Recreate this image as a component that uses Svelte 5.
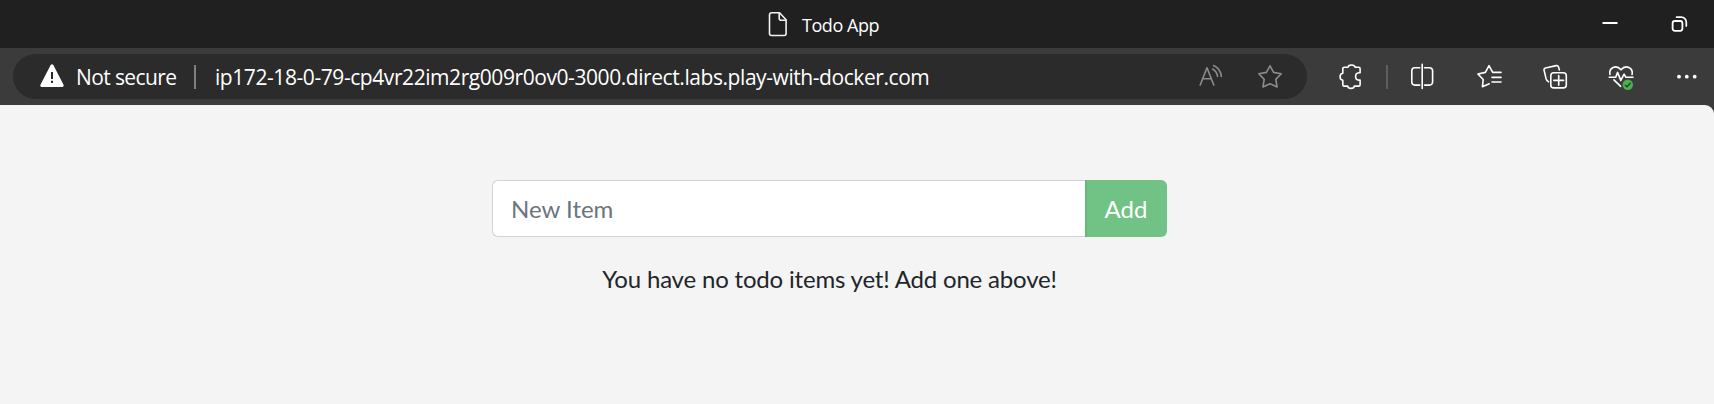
<script>
  let item = $state('');
</script>

<div class="window">
  <header class="titlebar">
    <div class="title">
      <svg width="20" height="26" viewBox="0 0 20 26" fill="none" stroke="#f2f2f2" stroke-width="1.6" stroke-linejoin="round">
        <path d="M3.5 1.8h8l6.6 7v13.7a2 2 0 0 1-2 2H3.5a2 2 0 0 1-2-2V3.8a2 2 0 0 1 2-2z" />
        <path d="M11.2 2v5.3a2 2 0 0 0 2 2h5" />
      </svg>
      <span>Todo App</span>
    </div>
    <div class="controls">
      <svg width="16" height="20" viewBox="0 0 16 20"><path d="M0.5 9h15" stroke="#fff" stroke-width="2" /></svg>
      <svg width="18" height="20" viewBox="0 0 18 20" fill="none" stroke="#fff" stroke-width="1.8">
        <rect x="1.6" y="7" width="9.8" height="9.8" rx="2.2" />
        <path d="M5.6 3.2h4.7a5 5 0 0 1 5 5V12" stroke-linecap="round" stroke-width="1.7" />
      </svg>
    </div>
  </header>

  <nav class="toolbar">
    <div class="address">
      <svg class="warn" width="26" height="29" viewBox="0 0 26 29">
        <path d="M13 3.8 23.2 23.5H2.8z" fill="#fff" stroke="#fff" stroke-width="3" stroke-linejoin="round" />
        <path d="M13 10v7M13 18.8v2.2" stroke="#2b2b2b" stroke-width="2" />
      </svg>
      <span class="secure">Not secure</span>
      <span class="rule"></span>
      <span class="url">ip172-18-0-79-cp4vr22im2rg009r0ov0-3000.direct.labs.play-with-docker.com</span>
      <div class="page-actions">
        <svg class="icon dim" viewBox="0 0 28 29">
          <path d="M4.2 23 11 5.8 17.8 23M6.8 16.8h8.4M16.6 7q4.2 2.2 5 7.5M17.6 3.5q7 3 7.7 11" />
        </svg>
        <svg class="icon dim" viewBox="0 0 28 29">
          <path d="M14 3.8l3.6 6.6 7.6 1.4-5.4 5.6 1.3 7.6L14 21.7l-7.1 3.3 1.3-7.6-5.4-5.6 7.6-1.4z" />
        </svg>
      </div>
    </div>

    <svg class="icon puzzle" viewBox="0 0 28 29">
      <path d="M8.2 5.3H12C12.2 2.2 18.8 2.2 19 5.3h3.7q1.4 0 1.4 1.4v4h-1.2c-4.4.4-4.4 7 0 7.4h1.2v4.6q0 1.4-1.4 1.4h-4.4c-.3 3-6.3 3-6.6 0H8.2q-1.4 0-1.4-1.4v-4.4c-3.6-.5-3.6-6.5 0-7V6.7q0-1.4 1.4-1.4z" />
    </svg>
    <span class="rule faint"></span>
    <svg class="icon split" viewBox="0 0 28 29">
      <path d="M14.2 2.2v24.2M11.7 5.7H6.8a3 3 0 0 0-3 3v11.4a3 3 0 0 0 3 3h4.9M16.6 5.7h5a3 3 0 0 1 3 3v11.4a3 3 0 0 1-3 3h-5" />
    </svg>
    <svg class="icon favs" viewBox="0 0 28 29">
      <path d="M26 10.4h-8.3L14 3.7l-3.6 6.7-7.5 1.6 5.3 5.5-.8 7.3 6.8-3M17 15.4h9M17 20h9" />
    </svg>
    <svg class="icon coll" viewBox="0 0 28 29">
      <rect x="9.8" y="10.7" width="15.5" height="15.2" rx="3" />
      <path d="M17.7 13.5v9.8M12.8 18.4h9.8M18.4 8l-.9-3a2 2 0 0 0-2.2-1.4L4.5 6a2 2 0 0 0-1.4 2.4l2 8.4q.6 2.2 2.4 3" />
    </svg>
    <svg class="icon heart" viewBox="0 0 28 29">
      <path d="M2.9 12.4C1.7 6.2 9 1.7 14 7.8c5-6.1 12.3-1.6 11.1 4.6M2.2 15.2h6.5l1.9-4.8 3.2 8 3.3-6.3 1.7 3.1h7.2M6.9 17.8l6.8 6.5" />
      <circle cx="20.8" cy="22.8" r="5.2" fill="#4caf50" stroke="none" />
      <path d="M18.3 23.1l1.7 1.6 3.3-3.5" stroke="#25402b" stroke-width="1.3" />
    </svg>
    <svg class="icon dots" viewBox="0 0 28 29">
      <g fill="#fff" stroke="none"><circle cx="6" cy="14.7" r="1.9" /><circle cx="13.8" cy="14.7" r="1.9" /><circle cx="21.7" cy="14.7" r="1.9" /></g>
    </svg>
  </nav>

  <main>
    <form onsubmit={(e) => e.preventDefault()}>
      <input type="text" placeholder="New Item" bind:value={item} />
      <button type="submit" disabled={!item}>Add</button>
    </form>
    <p>You have no todo items yet! Add one above!</p>
  </main>
</div>

<style>
  :global(body) { margin: 0; background: #3b3b3b; }
  .window { width: 1714px; height: 404px; display: flex; flex-direction: column; overflow: hidden; background: #3b3b3b; color: #fff; font-family: "Open Sans", sans-serif; }
  .window * { box-sizing: border-box; }
  svg { display: block; flex: none; }
  .titlebar { height: 48px; flex: none; display: flex; align-items: center; background: #202020; }
  .title { display: flex; align-items: center; gap: 14px; margin-left: 768px; font-size: 18px; letter-spacing: -0.45px; white-space: nowrap; }
  .title span { line-height: 24px; padding-top: 2px; }
  .controls { display: flex; gap: 53px; margin-left: auto; margin-right: 25px; }
  .toolbar { height: 57px; flex: none; display: flex; align-items: center; padding-left: 13px; }
  .address { width: 1294px; height: 45px; flex: none; border-radius: 23px; background: #2b2b2b; display: flex; align-items: center; padding: 0 23px 0 26px; font-size: 21px; white-space: nowrap; }
  .secure { margin-left: 11px; width: 102px; letter-spacing: -0.62px; }
  .rule { width: 2px; height: 24px; flex: none; background: #808080; margin-left: 16px; }
  .url { margin-left: 19px; letter-spacing: -0.43px; }
  .page-actions { display: flex; gap: 32px; margin-left: auto; }
  .icon { width: 28px; height: 29px; fill: none; stroke: #fff; stroke-width: 1.6; stroke-linejoin: round; stroke-linecap: round; }
  .dim { stroke: #8c8c8c; }
  .puzzle { margin-left: 29px; }
  .faint { background: #5e5e5e; margin-left: 22px; }
  .split { margin-left: 20px; }
  .favs { margin-left: 39px; }
  .coll, .heart, .dots { margin-left: 38px; }
  main { flex: 1; background: #f4f4f4; border-top-right-radius: 9px; padding: 75px 547px 0 492px; font-family: Lato, sans-serif; font-size: 24px; }
  form { display: flex; height: 57px; }
  input { flex: 1; min-width: 0; border: 1px solid #ced4da; border-right: 0; border-radius: 6px 0 0 6px; background: #fff; padding: 0 18px; margin: 0; font: inherit; color: #495057; outline: 0; }
  input::placeholder { color: #6c757d; opacity: 1; }
  button { width: 82px; flex: none; border: 0; border-left: 2px solid #65b878; border-radius: 0 6px 6px 0; background: #71c285; color: #fff; font: inherit; padding: 0 2px 0 0; }
  p { margin: 24px 0 0; line-height: 36px; text-align: center; letter-spacing: -0.18px; color: #212529; }
</style>
